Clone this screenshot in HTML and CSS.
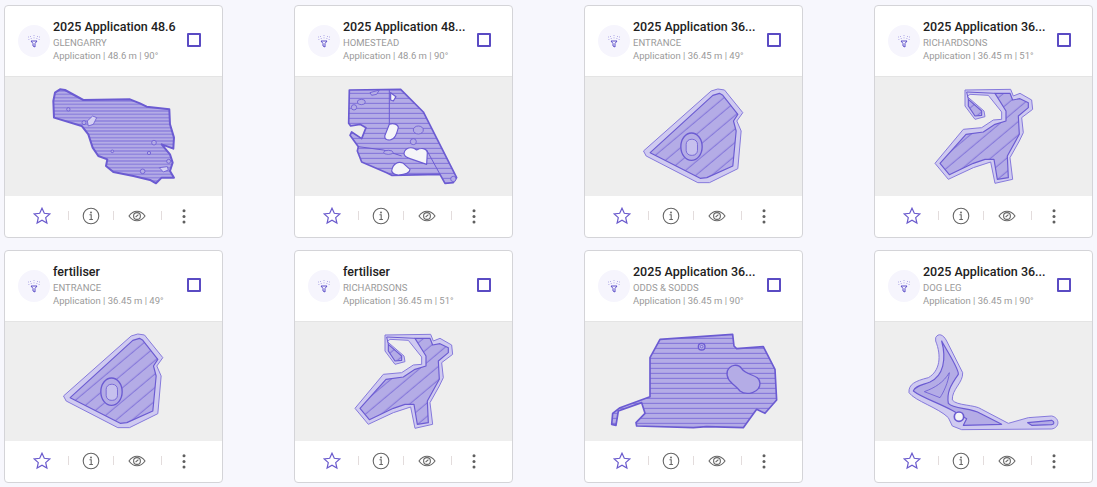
FILE: index.html
```html
<!DOCTYPE html>
<html lang="en">

<head>
    <meta charset="UTF-8">
    <title>Applications</title>
    <link rel="stylesheet" href="styles.css">
</head>

<body>

    <main class="grid">

        <article class="card">
            <header class="top">
                <div class="lamp">
                    <svg width="16" height="16" viewBox="0 0 16 16">
                        <use href="#lamp"/>
                        <defs>
                            <g id="lamp">
                                <path class="lamp-funnel" d="M5 8h6l-2 2.500v3.500l-2 -1v-2.500z"/>
                                <path class="lamp-spray" d="M2 4h.8M2.500 6.500h.8M4.500 3v.8M4.800 5.500h.8M8 2v.8M8 4.500v.8M11.500 3v.8M10.500 5.500h.8M13.200 4h.8M12.700 6.500h.8"/>
                            </g>
                        </defs>
                    </svg>
                </div>
                <div class="info">
                    <h2>2025 Application 48.6</h2>
                    <p class="place">GLENGARRY</p>
                    <p>Application | 48.6 m | 90°</p>
                </div>
                <span class="check"></span>
            </header>
            <div class="map">
                <svg class="field">
                    <defs>
                        <pattern id="lines-fine" patternUnits="userSpaceOnUse" width="10" height="10">
                            <rect class="hatch-bg" width="10" height="10"/>
                            <path class="hatch-line" d="M0 5h10"/>
                        </pattern>
                        <pattern id="lines" patternUnits="userSpaceOnUse" width="15" height="15">
                            <rect class="hatch-bg" width="15" height="15"/>
                            <path class="hatch-line" d="M0 7h15"/>
                        </pattern>
                        <pattern id="lines-slant" patternUnits="userSpaceOnUse" width="30" height="31" patternTransform="rotate(-40)">
                            <rect class="hatch-bg" width="30" height="31"/>
                            <path class="hatch-line" d="M0 15h30"/>
                        </pattern>
                        <g id="footer-star">
                            <path d="M12 4.200l2.300 5.100 5.500 .6 -4.100 3.700 1.200 5.500 -4.900 -2.800 -4.900 2.800 1.200 -5.500 -4.100 -3.700 5.500 -.6z"/>
                        </g>
                        <g id="footer-info">
                            <circle cx="12" cy="12" r="7.800"/>
                            <path d="M10.500 10.800h1.700v4.600M10.300 15.500h3.600"/>
                            <circle class="dot" cx="12" cy="8.500" r=".9"/>
                        </g>
                        <g id="footer-eye">
                            <path d="M4 12c2.200 -3.200 5 -4.800 8 -4.800s5.800 1.600 8 4.800c-2.200 3.200 -5 4.800 -8 4.800s-5.800 -1.600 -8 -4.800z"/>
                            <circle cx="12" cy="12" r="3.400"/>
                            <path d="M10.600 13l2.800 -2.400"/>
                        </g>
                        <g id="footer-more">
                            <circle class="dot" cx="12" cy="6.800" r="1.500"/>
                            <circle class="dot" cx="12" cy="12.400" r="1.500"/>
                            <circle class="dot" cx="12" cy="18" r="1.500"/>
                        </g>
                    </defs>
                    <g transform="translate(25 -1) scale(.3333)">
                        <path class="edge fine" d="M70 75L75 50L90 40L105 42L160 72L300 70L330 82L350 92L418 100L420 145L432 185L430 218L395 205L420 235L428 260L420 285L432 305L395 305L378 322L360 312L310 300L250 288L228 270L232 250L205 240L188 215L175 175L155 150L72 125Z"/>
                        <path class="blob pale" d="M172 135L188 120L200 125L190 145L175 150Z"/>
                        <circle class="blob" cx="162" cy="140" r="6"/>
                        <circle class="blob" cx="115" cy="100" r="5"/>
                        <circle class="blob" cx="372" cy="200" r="7"/>
                        <circle class="blob" cx="247" cy="226" r="4"/>
                        <circle class="blob" cx="357" cy="231" r="5"/>
                        <circle class="blob" cx="338" cy="286" r="7"/>
                        <circle class="blob" cx="416" cy="256" r="6"/>
                        <path class="blob pale" d="M388 275L412 272L415 282L400 288Z"/>
                    </g>
                </svg>
            </div>
            <footer class="actions">
                <svg class="star" viewBox="0 0 24 24"><use href="#footer-star"/></svg>
                <i class="sep"></i>
                <svg class="icon" viewBox="0 0 24 24"><use href="#footer-info"/></svg>
                <i class="sep"></i>
                <svg class="icon" viewBox="0 0 24 24"><use href="#footer-eye"/></svg>
                <i class="sep"></i>
                <svg class="icon" viewBox="0 0 24 24"><use href="#footer-more"/></svg>
            </footer>
        </article>

        <article class="card">
            <header class="top">
                <div class="lamp"><svg width="16" height="16" viewBox="0 0 16 16"><use href="#lamp"/></svg></div>
                <div class="info">
                    <h2>2025 Application 48...</h2>
                    <p class="place">HOMESTEAD</p>
                    <p>Application | 48.6 m | 90°</p>
                </div>
                <span class="check"></span>
            </header>
            <div class="map">
                <svg class="field">
                    <g transform="translate(35 -1) scale(.3333)">
                        <path class="edge lined" d="M58 42L212 40L280 108L380 305L370 320L345 322L330 295L185 298L170 290L95 258L82 225L85 212L60 178L65 168L95 188L108 155L90 145L62 150L56 142Z"/>
                        <path class="divider" d="M178 42V145M85 212L160 222L215 240M290 222L330 295"/>
                        <path class="hole" d="M222 232C225 215 245 210 260 222C272 215 290 215 292 230L290 265L240 248C230 245 222 240 222 232Z"/>
                        <path class="hole" d="M178 145C190 140 205 145 205 155C200 175 195 190 180 192C165 192 160 185 168 170Z"/>
                        <path class="hole" d="M185 285C188 262 205 255 220 262L240 280C240 292 225 296 205 297C195 296 187 292 185 285Z"/>
                        <path class="hole" d="M182 50L198 62L190 75L182 72Z"/>
                        <path class="blob" d="M120 50L148 42L140 55L125 58Z"/>
                        <ellipse class="blob" cx="94" cy="78" rx="12" ry="8"/>
                        <circle class="blob" cx="72" cy="94" r="8"/>
                        <ellipse class="blob" cx="265" cy="162" rx="15" ry="12"/>
                        <circle class="blob" cx="250" cy="197" r="9"/>
                        <ellipse class="blob" cx="175" cy="229" rx="14" ry="6"/>
                        <circle class="blob" cx="370" cy="309" r="8"/>
                    </g>
                </svg>
            </div>
            <footer class="actions">
                <svg class="star" viewBox="0 0 24 24"><use href="#footer-star"/></svg>
                <i class="sep"></i>
                <svg class="icon" viewBox="0 0 24 24"><use href="#footer-info"/></svg>
                <i class="sep"></i>
                <svg class="icon" viewBox="0 0 24 24"><use href="#footer-eye"/></svg>
                <i class="sep"></i>
                <svg class="icon" viewBox="0 0 24 24"><use href="#footer-more"/></svg>
            </footer>
        </article>

        <article class="card">
            <header class="top">
                <div class="lamp"><svg width="16" height="16" viewBox="0 0 16 16"><use href="#lamp"/></svg></div>
                <div class="info">
                    <h2>2025 Application 36...</h2>
                    <p class="place">ENTRANCE</p>
                    <p>Application | 36.45 m | 49°</p>
                </div>
                <span class="check"></span>
            </header>
            <div class="map">
                <svg class="field">
                    <g id="entrance" transform="translate(44.500 -1) scale(.3333)">
                        <path class="buffer" d="M245 45L265 39L285 42L340 110L322 135L335 165L325 278L240 320L205 320L50 240L42 225Z"/>
                        <path class="edge slanted" d="M250 58L270 52L280 58L325 115L312 135L320 165L310 270L232 305L212 307L62 230Z"/>
                        <ellipse class="blob thick" cx="186" cy="212" rx="32" ry="41"/>
                        <rect class="ring" x="170" y="190" width="34" height="48" rx="15"/>
                    </g>
                </svg>
            </div>
            <footer class="actions">
                <svg class="star" viewBox="0 0 24 24"><use href="#footer-star"/></svg>
                <i class="sep"></i>
                <svg class="icon" viewBox="0 0 24 24"><use href="#footer-info"/></svg>
                <i class="sep"></i>
                <svg class="icon" viewBox="0 0 24 24"><use href="#footer-eye"/></svg>
                <i class="sep"></i>
                <svg class="icon" viewBox="0 0 24 24"><use href="#footer-more"/></svg>
            </footer>
        </article>

        <article class="card">
            <header class="top">
                <div class="lamp"><svg width="16" height="16" viewBox="0 0 16 16"><use href="#lamp"/></svg></div>
                <div class="info">
                    <h2>2025 Application 36...</h2>
                    <p class="place">RICHARDSONS</p>
                    <p>Application | 36.45 m | 51°</p>
                </div>
                <span class="check"></span>
            </header>
            <div class="map">
                <svg class="field">
                    <g id="richardsons" transform="translate(45 -1) scale(.3333)">
                        <path class="buffer" d="M135 42L272 40L280 60L300 52L335 72L338 100L305 125L310 170L298 195L270 245L278 310L225 322L212 258L160 275L85 310L45 262L130 160L185 155L220 132L245 130L245 108L205 58L150 55L142 62L192 105L195 122L165 130L135 90Z"/>
                        <path class="edge slanted" d="M225 52L270 52L278 72L300 68L325 80L325 95L295 120L298 175L262 240L265 305L232 310L222 250L195 250L160 262L88 296L60 262L138 175L190 168L225 145L258 135L258 105Z"/>
                        <path class="edge slanted" d="M145 70L185 105L185 118L165 120L145 90Z"/>
                        <path class="divider" d="M145 70L140 48L225 52"/>
                    </g>
                </svg>
            </div>
            <footer class="actions">
                <svg class="star" viewBox="0 0 24 24"><use href="#footer-star"/></svg>
                <i class="sep"></i>
                <svg class="icon" viewBox="0 0 24 24"><use href="#footer-info"/></svg>
                <i class="sep"></i>
                <svg class="icon" viewBox="0 0 24 24"><use href="#footer-eye"/></svg>
                <i class="sep"></i>
                <svg class="icon" viewBox="0 0 24 24"><use href="#footer-more"/></svg>
            </footer>
        </article>

        <article class="card">
            <header class="top">
                <div class="lamp"><svg width="16" height="16" viewBox="0 0 16 16"><use href="#lamp"/></svg></div>
                <div class="info">
                    <h2>fertiliser</h2>
                    <p class="place">ENTRANCE</p>
                    <p>Application | 36.45 m | 49°</p>
                </div>
                <span class="check"></span>
            </header>
            <div class="map">
                <svg class="field"><use href="#entrance"/></svg>
            </div>
            <footer class="actions">
                <svg class="star" viewBox="0 0 24 24"><use href="#footer-star"/></svg>
                <i class="sep"></i>
                <svg class="icon" viewBox="0 0 24 24"><use href="#footer-info"/></svg>
                <i class="sep"></i>
                <svg class="icon" viewBox="0 0 24 24"><use href="#footer-eye"/></svg>
                <i class="sep"></i>
                <svg class="icon" viewBox="0 0 24 24"><use href="#footer-more"/></svg>
            </footer>
        </article>

        <article class="card">
            <header class="top">
                <div class="lamp"><svg width="16" height="16" viewBox="0 0 16 16"><use href="#lamp"/></svg></div>
                <div class="info">
                    <h2>fertiliser</h2>
                    <p class="place">RICHARDSONS</p>
                    <p>Application | 36.45 m | 51°</p>
                </div>
                <span class="check"></span>
            </header>
            <div class="map">
                <svg class="field"><use href="#richardsons"/></svg>
            </div>
            <footer class="actions">
                <svg class="star" viewBox="0 0 24 24"><use href="#footer-star"/></svg>
                <i class="sep"></i>
                <svg class="icon" viewBox="0 0 24 24"><use href="#footer-info"/></svg>
                <i class="sep"></i>
                <svg class="icon" viewBox="0 0 24 24"><use href="#footer-eye"/></svg>
                <i class="sep"></i>
                <svg class="icon" viewBox="0 0 24 24"><use href="#footer-more"/></svg>
            </footer>
        </article>

        <article class="card">
            <header class="top">
                <div class="lamp"><svg width="16" height="16" viewBox="0 0 16 16"><use href="#lamp"/></svg></div>
                <div class="info">
                    <h2>2025 Application 36...</h2>
                    <p class="place">ODDS &amp; SODDS</p>
                    <p>Application | 36.45 m | 90°</p>
                </div>
                <span class="check"></span>
            </header>
            <div class="map">
                <svg class="field">
                    <g transform="translate(15 4) scale(.3333)">
                        <path class="edge lined" d="M180 40L398 25L402 60L410 68L490 62L525 130L530 222L495 262L470 250L430 305L320 302L280 305L110 300L108 290L135 262L125 230L55 255L48 298L35 295L38 262L60 245L150 212L150 95Z"/>
                        <path class="blob thick" d="M382 135C390 115 415 112 425 128C440 150 480 145 480 172C480 200 440 210 420 195C405 175 375 165 382 135Z"/>
                        <circle class="blob thick" cx="305" cy="62" r="10"/>
                        <circle class="ring" cx="305" cy="62" r="4"/>
                    </g>
                </svg>
            </div>
            <footer class="actions">
                <svg class="star" viewBox="0 0 24 24"><use href="#footer-star"/></svg>
                <i class="sep"></i>
                <svg class="icon" viewBox="0 0 24 24"><use href="#footer-info"/></svg>
                <i class="sep"></i>
                <svg class="icon" viewBox="0 0 24 24"><use href="#footer-eye"/></svg>
                <i class="sep"></i>
                <svg class="icon" viewBox="0 0 24 24"><use href="#footer-more"/></svg>
            </footer>
        </article>

        <article class="card">
            <header class="top">
                <div class="lamp"><svg width="16" height="16" viewBox="0 0 16 16"><use href="#lamp"/></svg></div>
                <div class="info">
                    <h2>2025 Application 36...</h2>
                    <p class="place">DOG LEG</p>
                    <p>Application | 36.45 m | 90°</p>
                </div>
                <span class="check"></span>
            </header>
            <div class="map">
                <svg class="field">
                    <g transform="translate(20 4) scale(.3333)">
                        <path class="buffer" d="M122 35C130 20 145 25 155 45L203 140C205 170 170 190 172 222C185 240 240 235 260 250L340 292L400 275L470 270C495 275 495 305 470 309L200 311L172 300L160 275C130 245 60 225 42 200C40 175 60 165 100 155C135 135 140 90 122 45Z"/>
                        <path class="edge" d="M140 45C165 90 192 130 190 145C165 180 155 200 160 232C175 250 230 245 255 262L320 295L205 298L215 278L175 255C130 230 80 215 55 195C60 180 80 178 105 168C145 150 155 100 140 45Z"/>
                        <path class="edge-thin" d="M163 140C160 170 145 200 135 215L88 197C120 185 145 170 163 140Z"/>
                        <path class="edge" d="M398 290L470 283C480 288 478 295 470 296L410 298Z"/>
                        <circle class="hole wide" cx="192" cy="272" r="14"/>
                    </g>
                </svg>
            </div>
            <footer class="actions">
                <svg class="star" viewBox="0 0 24 24"><use href="#footer-star"/></svg>
                <i class="sep"></i>
                <svg class="icon" viewBox="0 0 24 24"><use href="#footer-info"/></svg>
                <i class="sep"></i>
                <svg class="icon" viewBox="0 0 24 24"><use href="#footer-eye"/></svg>
                <i class="sep"></i>
                <svg class="icon" viewBox="0 0 24 24"><use href="#footer-more"/></svg>
            </footer>
        </article>

    </main>

</body>

</html>
```

FILE: styles.css
```css
* {
    box-sizing: border-box;
}

body {
    margin: 0;
    padding: 5px 4px;
    background-color: #f7f7fd;
    font-family: "Roboto", "Liberation Sans", sans-serif;
}

.grid {
    display: grid;
    grid-template-columns: repeat(4, 1fr);
    column-gap: 71px;
    row-gap: 12px;
}

.card {
    min-width: 0;
    height: 233px;
    background-color: #fff;
    border: 1px solid #d4d4d8;
    border-radius: 4px;
    overflow: hidden;
}

.top {
    display: flex;
    align-items: center;
    height: 70px;
    padding: 0 21px 0 13px;
}

.lamp {
    flex: none;
    display: flex;
    align-items: center;
    justify-content: center;
    width: 32px;
    height: 32px;
    margin-right: 3px;
    border-radius: 50%;
    background-color: #f6f5fd;
}

.lamp-funnel {
    fill: none;
    stroke: #5d4fc9;
    stroke-width: 1;
}

.lamp-spray {
    fill: none;
    stroke: #8074d8;
    stroke-width: .7;
}

.info {
    flex: 1;
    min-width: 0;
    margin-top: -1px;
}

.info h2 {
    margin: 0 0 1px;
    font-size: 12.500px;
    line-height: 16px;
    font-weight: 500;
    color: #212121;
    white-space: nowrap;
}

.info p {
    margin: 0;
    font-size: 9.500px;
    line-height: 13px;
    color: #9a9a9a;
    white-space: nowrap;
}

.check {
    flex: none;
    width: 14px;
    height: 14px;
    margin: -2px 0 0 9px;
    border: 2px solid #5a4bc3;
    border-radius: 1px;
}

.map {
    height: 120px;
    background-color: #eeeeee;
    border-top: 1px solid #e4e4e4;
}

.field {
    display: block;
    width: 100%;
    height: 100%;
}

.hatch-bg {
    fill: #b4ace6;
}

.hatch-line {
    fill: none;
    stroke: #7364d6;
    stroke-width: 2.500;
}

.edge {
    stroke: #6b5bd2;
    stroke-width: 3.500;
    stroke-linejoin: round;
    fill: #b4ace6;
}

.edge.fine {
    fill: url(#lines-fine);
    stroke-width: 6;
}

.edge.lined {
    fill: url(#lines);
    stroke-width: 5;
}

.edge.slanted {
    fill: url(#lines-slant);
}

.edge-thin {
    fill: #b4ace6;
    stroke: #6b5bd2;
    stroke-width: 2.500;
}

.divider {
    fill: none;
    stroke: #6b5bd2;
    stroke-width: 3;
}

.buffer {
    fill: #cfcaf0;
    stroke: #8679dc;
    stroke-width: 3;
    stroke-linejoin: round;
}

.ring {
    fill: #c6c0ee;
    stroke: #6b5bd2;
    stroke-width: 2.500;
}

.hole {
    fill: #f5f5f8;
    stroke: #6b5bd2;
    stroke-width: 3.500;
    stroke-linejoin: round;
}

.hole.wide {
    stroke-width: 5;
}

.blob {
    fill: #b4ace6;
    stroke: #6b5bd2;
    stroke-width: 2.500;
}

.blob.pale {
    fill: #d5d1f3;
}

.blob.thick {
    stroke-width: 4;
}

.actions {
    display: flex;
    align-items: center;
    height: 39px;
    padding: 0 0 0 25px;
    gap: 10px;
}

.star,
.icon {
    flex: none;
    width: 24px;
    height: 24px;
    fill: none;
}

.star {
    stroke: #6a5acd;
    stroke-width: 1.200;
    margin-right: 3.500px;
}

.icon {
    stroke: #666;
    stroke-width: 1.100;
}

.icon:nth-of-type(3) {
    margin: 0 1.500px;
}

.dot {
    fill: #5f5f5f;
    stroke: none;
}

.sep {
    flex: none;
    width: 1px;
    height: 9px;
    background-color: #e3dcdc;
}
```
